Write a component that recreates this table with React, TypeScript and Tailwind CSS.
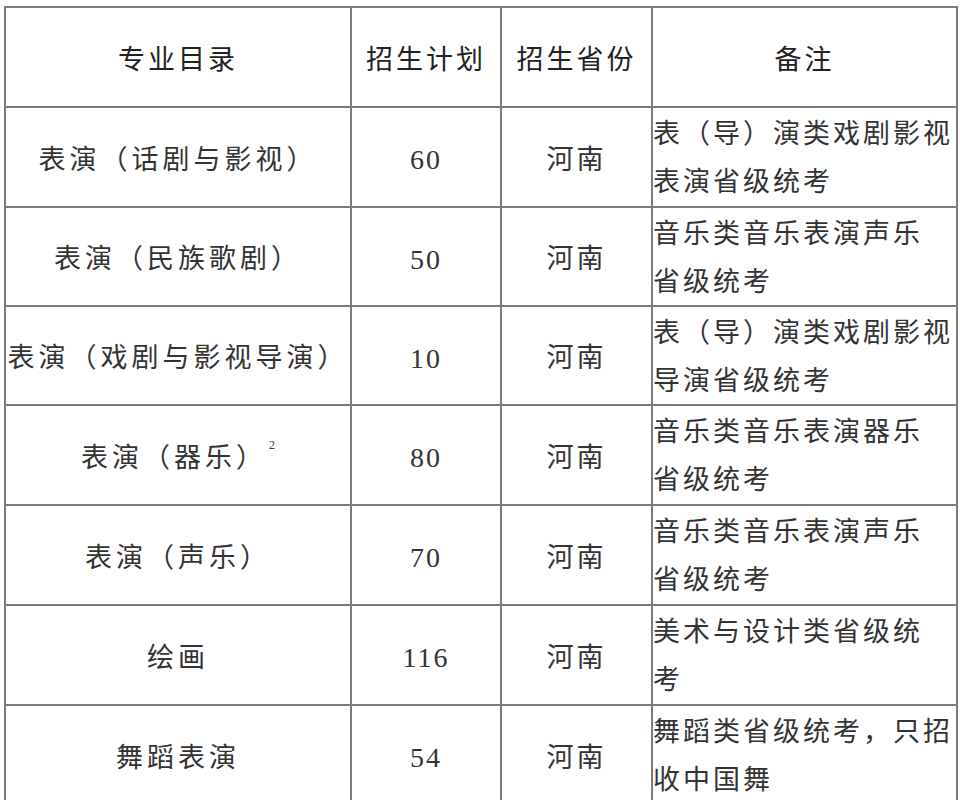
const cellFont = "font-['Liberation_Serif','Noto_Sans_CJK_SC',serif]";

type Row = {
  name: string;
  sup?: string;
  plan: string;
  province: string;
  note: string[];
  h: string;
};

const rows: Row[] = [
  { name: "表演（话剧与影视）", plan: "60", province: "河南", note: ["表（导）演类戏剧影视", "表演省级统考"], h: "h-[100px]" },
  { name: "表演（民族歌剧）", plan: "50", province: "河南", note: ["音乐类音乐表演声乐", "省级统考"], h: "h-[99px]" },
  { name: "表演（戏剧与影视导演）", plan: "10", province: "河南", note: ["表（导）演类戏剧影视", "导演省级统考"], h: "h-[99px]" },
  { name: "表演（器乐）", sup: "2", plan: "80", province: "河南", note: ["音乐类音乐表演器乐", "省级统考"], h: "h-[100px]" },
  { name: "表演（声乐）", plan: "70", province: "河南", note: ["音乐类音乐表演声乐", "省级统考"], h: "h-[100px]" },
  { name: "绘画", plan: "116", province: "河南", note: ["美术与设计类省级统", "考"], h: "h-[100px]" },
  { name: "舞蹈表演", plan: "54", province: "河南", note: ["舞蹈类省级统考，只招", "收中国舞"], h: "h-[100px]" },
];

const cell = "flex items-center border-r-2 border-b-2 border-[#7c7c7c] overflow-hidden";

export default function App() {
  return (
    <div className="min-h-[800px] w-[960px] bg-white pt-[6px] pl-[4px]">
      <div
        className={`grid w-[954px] grid-cols-[346px_150px_151px_305px] border-l-2 border-t-2 border-[#7c7c7c] text-[27px] text-[#333333] ${cellFont}`}
      >
        {/* header */}
        <div className={`${cell} h-[100px] justify-center pt-[6px] tracking-[3px] text-[#222222]`}>专业目录</div>
        <div className={`${cell} h-[100px] justify-center pt-[6px] tracking-[3px] text-[#222222]`}>招生计划</div>
        <div className={`${cell} h-[100px] justify-center pt-[6px] tracking-[3px] text-[#222222]`}>招生省份</div>
        <div className={`${cell} h-[100px] justify-center pt-[6px] tracking-[3px] text-[#222222]`}>备注</div>

        {rows.map((r) => (
          <div key={r.name} className="contents">
            <div className={`${cell} ${r.h} justify-center pt-[6px] whitespace-nowrap tracking-[4px]`}>
              <span>
                {r.name}
                {r.sup && (
                  <span className="relative -top-[18px] ml-[2px] inline-block text-[12px] tracking-normal">
                    {r.sup}
                  </span>
                )}
              </span>
            </div>
            <div className={`${cell} ${r.h} justify-center pt-[6px] text-[28px] tracking-[2px]`}>{r.plan}</div>
            <div className={`${cell} ${r.h} justify-center pt-[6px] tracking-[3px]`}>{r.province}</div>
            <div className={`${cell} ${r.h} flex-col !items-start justify-center pt-[2px] leading-[48px] tracking-[3px] whitespace-nowrap`}>
              {r.note.map((line) => (
                <span key={line}>{line}</span>
              ))}
            </div>
          </div>
        ))}
      </div>
    </div>
  );
}
